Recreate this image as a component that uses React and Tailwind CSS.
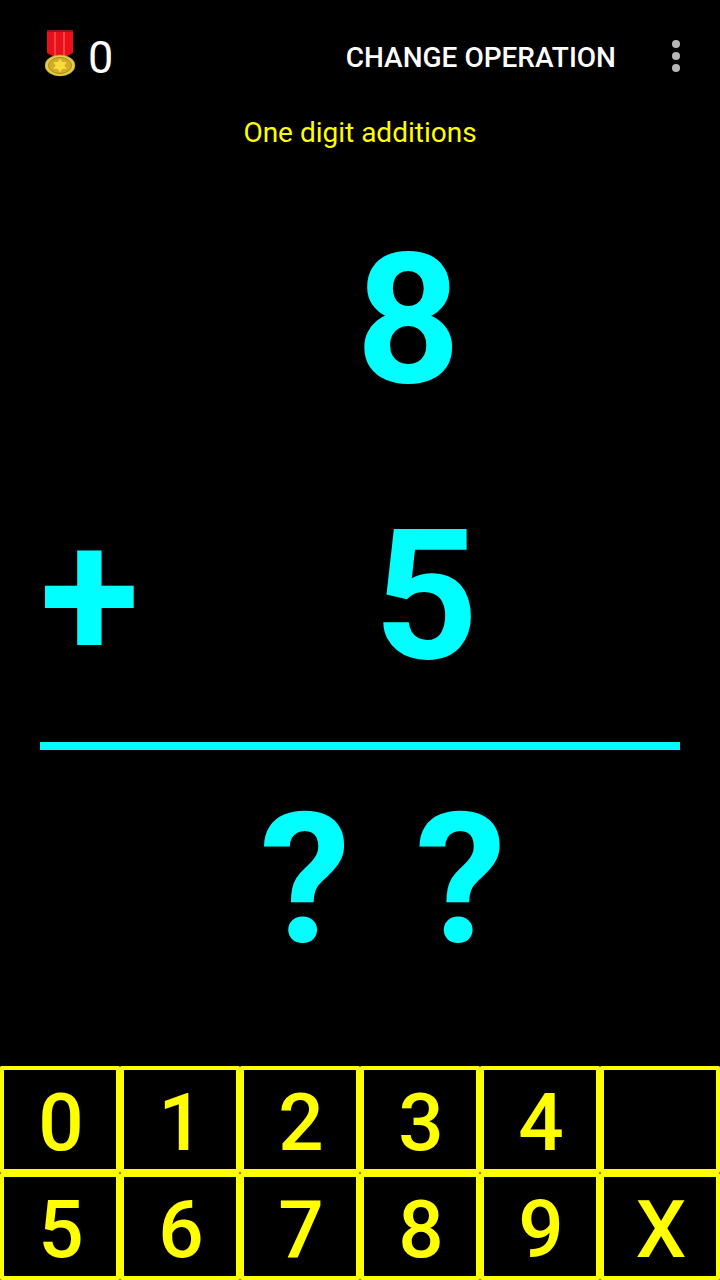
const keys = ["0", "1", "2", "3", "4", "", "5", "6", "7", "8", "9", "X"];

function Medal() {
  return (
    <svg width="32" height="47" viewBox="0 0 32 47" className="mb-[6px]">
      <path d="M2 0h26v23l-6 3h-14l-6-3z" fill="#e8101a" />
      <rect x="2" y="0" width="26" height="2" fill="#8c1a1a" />
      <rect x="9" y="2" width="2" height="24" fill="#f8403c" />
      <rect x="18" y="2" width="2" height="24" fill="#f8403c" />
      <ellipse cx="15" cy="35.5" rx="15" ry="10.5" fill="#e6cd48" stroke="#b0941f" strokeWidth="0.5" />
      <ellipse cx="15" cy="35.5" rx="11.5" ry="8" fill="#d4ae2a" stroke="#a98a1e" strokeWidth="1" />
      <path d="M15 28.5l2.2 3.6 4.4-.1-2.2 3.5 2.2 3.5-4.4-.1-2.2 3.6-2.2-3.6-4.4.1 2.2-3.5-2.2-3.5 4.4.1z" fill="#f7dc3c" />
    </svg>
  );
}

export default function App() {
  return (
    <div className="w-[720px] h-[1280px] bg-black flex flex-col font-['Roboto',sans-serif] overflow-hidden">
      {/* Action bar */}
      <div className="h-[112px] flex items-center pl-[45px] pr-[40px] shrink-0">
        <Medal />
        <span className="text-white text-[45px] leading-none ml-[11px] mt-[3px]">0</span>
        <span className="text-white text-[28px] font-medium ml-auto mt-1">CHANGE OPERATION</span>
        <div className="flex flex-col gap-1 ml-[56px]">
          <div className="w-2 h-2 rounded-full bg-[#b5b8b5]" />
          <div className="w-2 h-2 rounded-full bg-[#b5b8b5]" />
          <div className="w-2 h-2 rounded-full bg-[#b5b8b5]" />
        </div>
      </div>

      <p className="text-[#ffff00] text-[28px] leading-[42px] text-center">One digit additions</p>

      {/* Sum */}
      <div className="h-[334px] pt-[58px] pl-[356px] text-[#00ffff] text-[182px] font-bold leading-[216px]">8</div>
      <div className="h-[254px] flex text-[#00ffff] text-[182px] font-bold leading-[216px]">
        <span className="pl-[40px] w-[374px] shrink-0">+</span>
        <span>5</span>
      </div>
      <div className="h-2 mx-10 bg-[#00ffff] shrink-0" />

      <div className="flex pl-[260px] gap-[65px] pt-[22px] text-[#00ffff] text-[182px] font-bold leading-[216px]">
        <span>?</span>
        <span>?</span>
      </div>

      {/* Keypad */}
      <div className="mt-auto grid grid-cols-6 bg-[#5c5c30]">
        {keys.map((k, i) => (
          <div
            key={i}
            className="h-[107px] pt-[7px] pl-[2px] bg-black border-4 border-[#ffff00] rounded-[2px] flex items-center justify-center text-[#ffff00] text-[80px] font-medium leading-none"
          >
            {k}
          </div>
        ))}
      </div>
    </div>
  );
}
